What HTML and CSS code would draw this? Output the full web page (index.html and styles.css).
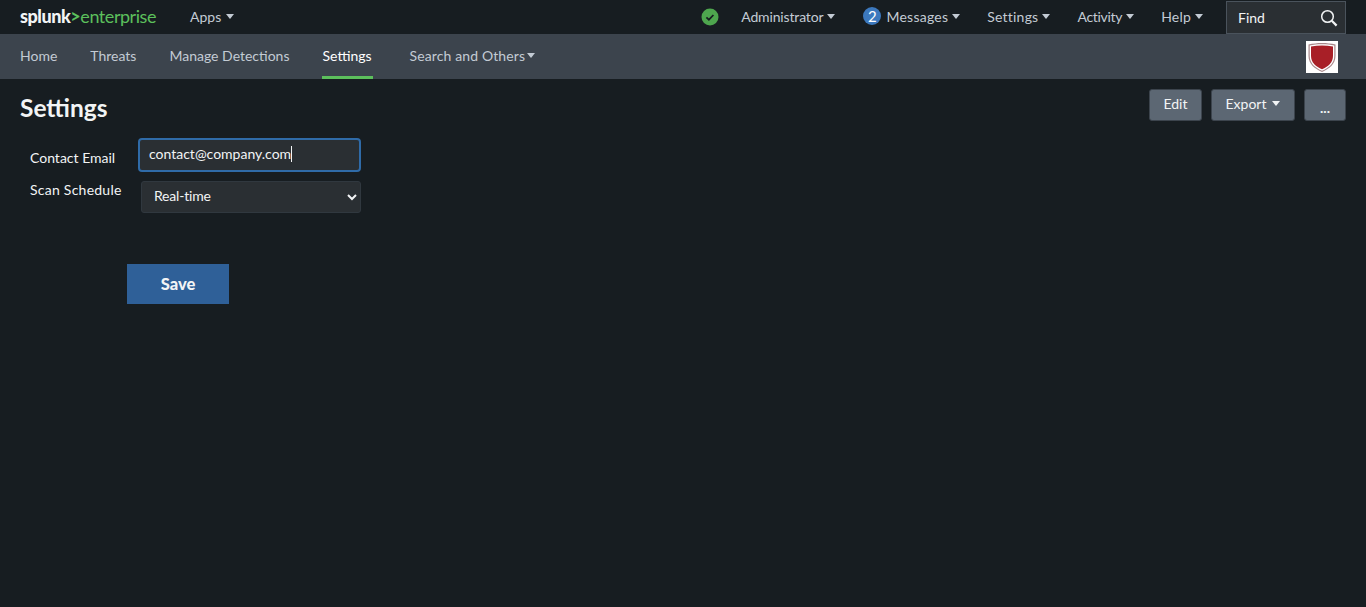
FILE: index.html
```html
<!DOCTYPE html>
<html lang="en">
<head>
<meta charset="utf-8">
<title>Settings</title>
<link rel="stylesheet" href="styles.css">
</head>
<body>
<header class="topbar">
  <div class="brand"><span class="brand-splunk">splunk</span><span class="brand-gt">&gt;</span><span class="brand-ent">enterprise</span></div>
  <a class="top-item apps">Apps<i class="caret"></i></a>
  <div class="top-right">
    <svg class="status" width="18" height="18" viewBox="0 0 18 18"><circle cx="9" cy="9" r="8.5" fill="#4ea64e"/><path d="M5.4 9.3l2.5 2.4 4.500-4.700" fill="none" stroke="#171d21" stroke-width="1.7"/></svg>
    <a class="top-item admin">Administrator<i class="caret"></i></a>
    <a class="top-item messages"><span class="badge">2</span>Messages<i class="caret"></i></a>
    <a class="top-item settings">Settings<i class="caret"></i></a>
    <a class="top-item activity">Activity<i class="caret"></i></a>
    <a class="top-item help">Help<i class="caret"></i></a>
    <div class="find"><span>Find</span>
      <svg width="18" height="18" viewBox="0 0 18 18"><circle cx="7.5" cy="7.5" r="5.8" fill="none" stroke="#f2f4f5" stroke-width="1.500"/><path d="M11.800 11.800l4.800 4.800" stroke="#f2f4f5" stroke-width="2.200"/></svg>
    </div>
  </div>
</header>
<nav class="appbar">
  <a class="nav-item">Home</a>
  <a class="nav-item">Threats</a>
  <a class="nav-item">Manage Detections</a>
  <a class="nav-item active">Settings</a>
  <a class="nav-item others">Search and Others<i class="caret"></i></a>
  <div class="app-logo">
    <svg width="32" height="32" viewBox="0 0 32 32"><rect width="32" height="32" fill="#fff"/><path d="M2.500 3.500C11 1.500 21 1.500 29.500 3.500V15C29.500 23 23 28 16 31C9 28 2.500 23 2.500 15Z" fill="#a8878a"/><path d="M3.700 4.500C11 2.800 21 2.800 28.300 4.500V15C28.300 22.500 22.500 27 16 29.800C9.500 27 3.700 22.500 3.700 15Z" fill="#fff"/><path d="M5 5.500C12 4 20 4 27 5.500V15C27 21.500 22 25.800 16 28.300C10 25.800 5 21.500 5 15Z" fill="#a81f27"/></svg>
  </div>
</nav>
<main class="page">
  <div class="title-row">
    <h1>Settings</h1>
    <div class="actions">
      <button class="btn edit">Edit</button>
      <button class="btn export">Export<i class="caret white"></i></button>
      <button class="btn more">...</button>
    </div>
  </div>
  <form class="form">
    <div class="field email-field">
      <label class="label">Contact Email</label>
      <div class="input"><span class="input-text">contact@company.com</span></div>
    </div>
    <div class="field schedule-field">
      <label class="label">Scan Schedule</label>
      <select class="select"><option>Real-time</option></select>
    </div>
    <button type="button" class="save">Save</button>
  </form>
</main>
</body>
</html>
```
FILE: styles.css
```css
* { box-sizing: border-box; }
html, body { height: 100%; }
body {
  margin: 0;
  background: #171d21;
  color: #f2f4f5;
  font-family: Lato, "Open Sans", sans-serif;
  font-size: 14px;
  overflow: hidden;
}
.topbar {
  height: 34px;
  display: flex;
  align-items: center;
  padding-left: 20px;
  background: #171d21;
}
.brand { width: 170px; font-size: 18px; line-height: 32px; letter-spacing: -0.45px; white-space: nowrap; margin-bottom: 2px; }
.brand-splunk { font-weight: 900; color: #f2f4f5; }
.brand-gt { color: #5cc05c; font-weight: 700; }
.brand-ent { color: #5cc05c; }
.top-item {
  color: #c3cbd4;
  display: inline-flex;
  align-items: center;
  white-space: nowrap;
  margin-bottom: 2px;
}
.caret {
  display: inline-block;
  width: 0;
  height: 0;
  margin-left: 4px;
  border-left: 4px solid transparent;
  border-right: 4px solid transparent;
  border-top: 5px solid #c3cbd4;
}
.apps .caret { margin-left: 5px; }
.caret.white { border-top-color: #f2f4f5; margin-left: 6px; }
.top-right { margin-left: auto; display: flex; align-items: center; gap: 27px; padding-right: 20px; }
.status { margin-right: -5px; }
.admin { letter-spacing: -0.15px; margin-right: 1px; }
.messages { letter-spacing: 0.25px; }
.settings { letter-spacing: 0.2px; }
.activity { letter-spacing: -0.3px; }
.help { letter-spacing: 0.2px; }
.badge {
  width: 18px;
  height: 18px;
  border-radius: 50%;
  background: #3c78bd;
  color: #fff;
  text-align: center;
  line-height: 18px;
  font-size: 15px;
  margin-right: 5px;
}
.find {
  width: 120px;
  height: 33px;
  margin-left: -4px;
  margin-top: 1px;
  padding: 0 7px 0 11px;
  display: flex;
  align-items: center;
  justify-content: space-between;
  background: #2a2f33;
  border: 1px solid #4a535c;
  color: #f2f4f5;
}
.appbar {
  height: 45px;
  display: flex;
  padding-left: 20px;
  background: #3c444d;
}
.nav-item {
  height: 45px;
  line-height: 44px;
  margin-right: 33px;
  color: #c3cbd4;
  white-space: nowrap;
}
.nav-item.active { color: #fff; padding: 0 1px; margin-left: -1px; margin-right: 37px; border-bottom: 3px solid #5cc05c; }
.nav-item.others { display: inline-flex; align-items: center; letter-spacing: 0.12px; padding-bottom: 2px; }
.nav-item.others .caret { margin-left: 2px; }
.app-logo { margin-left: auto; margin-right: 28px; padding-top: 7px; }
.page { padding: 0 20px; }
.title-row { display: flex; justify-content: space-between; height: 58px; }
h1 { margin: 15px 0 0; font-size: 24.5px; line-height: 28px; font-weight: 700; color: #f2f4f5; }
.actions { display: flex; gap: 9px; padding-top: 10px; align-items: flex-start; }
.btn {
  height: 32px;
  padding: 0 0 3px;
  background: #5c6773;
  border: 1px solid #3c444d;
  border-radius: 3px;
  color: #f2f4f5;
  font: inherit;
  display: inline-flex;
  align-items: center;
  justify-content: center;
}
.edit { width: 53px; }
.export { width: 84px; }
.more { width: 42px; padding: 4px 0 0; font-weight: 700; }
.form { padding-left: 10px; position: relative; }
.field { display: flex; align-items: flex-start; }
.label { color: #f2f4f5; white-space: nowrap; }
.email-field { height: 44px; }
.email-field .label { width: 108px; padding-top: 12px; }
.input {
  width: 223px;
  height: 34px;
  margin-top: 1px;
  padding-left: 9px;
  background: #2a2f33;
  border: 2px solid #2f6ba8;
  border-radius: 4px;
  line-height: 28px;
  color: #f2f4f5;
}
.input-text { border-right: 1px solid #f2f4f5; display: inline-block; line-height: 16px; }
.schedule-field { height: 83px; }
.schedule-field .label { width: 111px; letter-spacing: 0.25px; }
.select {
  width: 220px;
  height: 32px;
  padding: 0 0 4px 8px;
  background: #2a2f33;
  border: 1px solid #30383f;
  border-radius: 3px;
  color: #f2f4f5;
  font: inherit;
  letter-spacing: -0.2px;
}
.save {
  display: block;
  width: 102px;
  height: 40px;
  margin-left: 97px;
  padding-bottom: 2px;
  background: #2f6098;
  border: 0;
  color: #f2f4f5;
  font: 900 16.5px Lato, sans-serif;
}
```
